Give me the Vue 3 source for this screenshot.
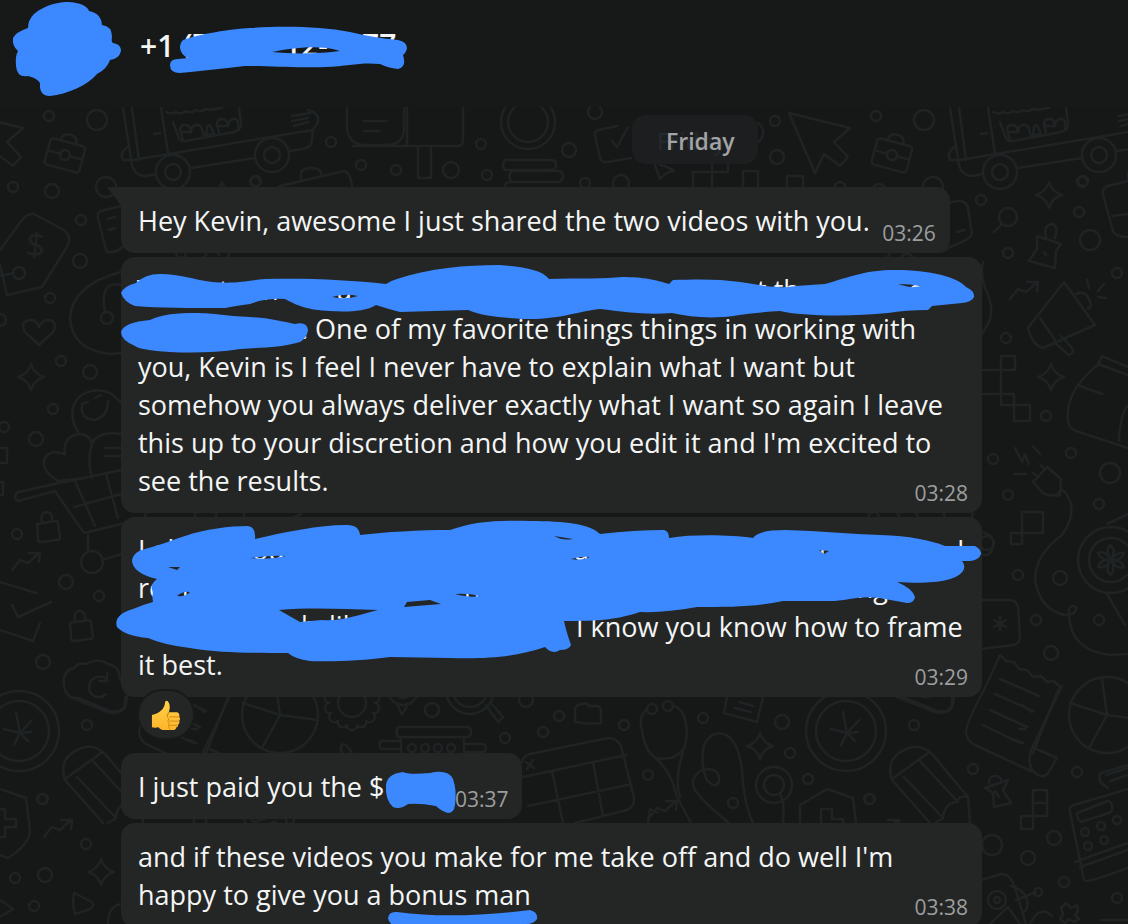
<script setup>
const tileWidth = 827
const tiles = [-tileWidth, 0, tileWidth]

const dots = [
  [49, 116, 5], [97, 120, 10], [13, 187, 5], [52, 191, 7], [106, 187, 10], [81, 220, 5],
  [331, 142, 5], [361, 165, 5], [396, 170, 5], [256, 181, 5], [595, 112, 7], [481, 144, 5],
  [569, 150, 7], [451, 170, 8], [487, 175, 5], [585, 183, 5], [621, 183, 8], [775, 121, 5],
  [777, 157, 7], [981, 200, 5], [1008, 217, 9], [1082, 182, 5], [1079, 212, 5],
  [1090, 240, 10], [1008, 253, 5], [1006, 338, 5], [1117, 273, 5], [80, 261, 7], [50, 298, 5],
  [19, 273, 6], [0, 320, 6], [61, 361, 5], [90, 372, 7], [53, 409, 5], [4, 427, 5],
  [36, 439, 7], [17, 534, 5], [66, 582, 7], [99, 596, 5], [43, 662, 7], [87, 725, 5],
  [43, 799, 5], [86, 844, 5], [15, 878, 5], [45, 875, 7], [34, 906, 5], [92, 562, 11],
  [1046, 416, 5], [1071, 453, 5], [993, 459, 5], [1008, 495, 5], [1110, 473, 10],
  [1099, 504, 5], [1018, 575, 5], [1060, 578, 7], [1036, 620, 5], [1099, 620, 5],
  [1051, 653, 7], [1111, 560, 22], [1111, 560, 33], [432, 710, 7], [505, 738, 5],
  [543, 732, 5], [559, 716, 5], [624, 725, 5], [526, 700, 7], [648, 775, 5], [703, 718, 5],
  [782, 722, 7], [790, 753, 5], [808, 779, 5], [733, 803, 5], [869, 799, 5], [973, 769, 5],
  [1077, 772, 5], [846, 731, 40], [846, 731, 30], [774, 785, 18], [774, 785, 10],
  [992, 845, 10], [1054, 838, 7], [1028, 858, 7], [1064, 882, 5], [1117, 898, 5],
  [997, 900, 9], [997, 900, 3], [1038, 892, 4], [173, 172, 17], [173, 172, 8],
  [272, 155, 17], [272, 155, 8], [528, 122, 27], [528, 122, 20], [107, 318, 6],
  [280, 715, 38], [352, 703, 14], [470, 690, 24],
  [470, 690, 17], [403, 690, 15], [403, 690, 8], [412, 748, 4], [425, 748, 4],
  [438, 748, 4], [451, 748, 4], [652, 709, 5], [668, 706, 5], [987, 543, 7],
  [1085, 832, 4], [1101, 826, 4], [1117, 820, 4], [1088, 846, 4], [1104, 840, 4],
]

const sparkle = (x, y, r) =>
  `M${x} ${y - r}Q${x + 3} ${y - 3} ${x + r} ${y}Q${x + 3} ${y + 3} ${x} ${y + r}Q${x - 3} ${y + 3} ${x - r} ${y}Q${x - 3} ${y - 3} ${x} ${y - r}Z`
const trend = (x, y) => `M${x} ${y}l8-10 8 3 11-10m-10 0h11l-1 9`
const padlock = (x, y) =>
  `M${x - 10} ${y - 7}l18-3q3 0 3 3l2 13q0 3-3 3l-16 2q-3 0-3-3zM${x - 5} ${y - 9}q-2-10 5-10q6 1 5 9`
const gear = (x, y, r, n) => {
  let d = ''
  for (let i = 0; i <= n; i++) {
    const a = (i / n) * Math.PI * 2
    const px = Math.round(x + r * Math.cos(a))
    const py = Math.round(y + r * Math.sin(a))
    d += i ? `A5 5 0 0 1 ${px} ${py}` : `M${px} ${py}`
  }
  return d
}

const doodles = [
  // pointer
  'M789 113L850 128L834 142L848 157L840 166L824 154L815 173Z',
  // van
  'M123 108L132 165Q135 176 146 176L156 174M132 108L139 160M161 108L168 153M128 147Q119 152 123 160L133 160L313 130L312 140Q312 147 303 149L290 151M191 168L255 158',
  'M173 122L178 136Q180 142 186 141L234 132Q242 129 241 123L239 108M166 112q5 3 10 0q5 3 10-1q5 3 10-1q5 3 9-1q8 2 18-2M154 134l6-1',
  'M183 140l-3-10q0-5 5-5t5 4l1 3h-10M191 132q0-6 5-7t6 5l2 6M206 135l1-7q2-5 4-1l3 7zM219 133l-2-9q0-5 5-5t5 4l1 3h-10M228 126q0-6 5-7t5 5l1 6',
  'M292 116l18-3M292 121l16-3M294 126l14-4M308 110Q320 113 318 122L313 130',
  // screens
  'M347 108V130Q350 145 365 145H385Q403 145 404 130V108M364 121H387M364 131H379M353 146H458Q463 146 463 140V108M407 108v38M418 147v31h13v-31',
  // books
  'M505 160h46q5 0 5 5t-5 5h-46q-4-5 0-10M512 171h46q5 0 5 5t-5 6h-46q-5-6 0-11M505 187q0-5 6-5h40',
  // checklist and case
  'M617 126L598 130Q594 132 595 136L600 158Q602 163 607 162L631 158M612 141L617 147L628 127M280 186L344 171Q350 172 352 186M301 178q-2-10 10-10q10 0 10 6',
  'M655 165l5 14q7-8 14-8q-5-4-14-6M693 186v-14h35v-10M712 162v24M743 187v-16h15v16M787 187v-11h16v11M758 123q6 4 5 11t-8 10',
  // price tag
  'M0 265L7 295L42 287L68 245Q72 235 62 229L34 214Q28 213 22 220L0 250M0 276l14-3',
  'M121 206l-20 5q-4 2-3 7l8 32q2 5 15-1M108 219l7-2M109 230l6-2',
  // headset and heart
  'M121 272Q72 285 70 318Q72 350 110 354L121 353M105 313Q99 280 121 285',
  'M39 345L25 332Q20 322 29 320Q37 319 39 327Q42 319 50 320Q58 323 53 332Z',
  sparkle(31, 377, 13), sparkle(1049, 195, 13), sparkle(1051, 377, 13), sparkle(760, 746, 13), sparkle(101, 872, 13),
  // hearts and trolley
  'M78 432Q66 411 79 397Q94 386 110 393L121 402M82 404Q80 419 94 420Q108 417 108 401M82 404l6-2M95 398l6-3',
  'M84 478L58 481Q40 470 45 458Q50 449 65 454Q62 438 78 434Q90 434 92 444M92 478Q86 455 94 440Q102 431 121 434M105 448h16M105 456h16',
  'M55 484L18 492Q12 497 18 501L55 491L84 533L125 523M55 484L121 470M74 507L121 494M75 481L95 526M106 474L118 518M88 535v15M102 560l20-6',
  padlock(47, 531), padlock(80, 630), trend(12, 570), trend(44, 837), trend(1010, 299), trend(649, 818),
  'M0 582L36 593M12 605L18 617L51 602M40 623L33 641L0 630M0 448h7v15h-7M0 482h3v13h-3',
  // cloud
  'M65 690Q60 672 74 668Q78 662 86 664Q98 657 108 664Q120 666 120 680Q128 686 127 700Q124 714 110 711L78 698Q68 699 65 690M107 679Q98 673 91 681Q86 691 94 696Q101 699 106 694M107 673v8h-8',
  // coin mark
  'M843 712l4 21 12-13M847 733l-16-4M847 733l8 8M847 733l-6 12M847 733l11-1',
  'M1111 560q-6-9-1-15q7 5 1 15q6-9 13-7q-2 8-13 7q11 0 13 7q-7 3-13-7q5 9 0 15q-7-5 0-15q-6 9-13 7q2-8 13-7q-11 0-13-7q7-3 13 7',
  // pencils
  'M930 823L892 780Q884 755 912 747Q924 745 933 755L968 797L970 823M892 779L928 753M904 777L943 818L935 823M920 761L958 802M943 818Q944 804 956 802Q960 795 968 797',
  // shields
  'M-27 840V805L0 789L26 798L30 830Q30 844 8 858L-20 848M-6 824v-15h11v10h11v8h-11v10h-6',
  // chart
  'M280 715L243 703M280 715L317 720M280 715L262 748M280 715L275 678M206 753L231 690M195 705l10 7M192 729h6M188 740l8 3',
  gear(352, 703, 23, 14),
  'M486 705l12 17 5-5-13-15M398 706l4 9 5-9',
  // till
  'M398 727h69q4 0 4 5t-4 5h-69q-3-5 0-10M401 739v14M464 739v14M401 741h-20q-3 4 0 8h20M464 744h20q4 4 0 8h-20M342 753q-3-8 2-9q4 2 8 9',
  'M575 722v-14q2-4 8-4q4-2 6 2h8q4 1 4 5v12q-12 2-26-1',
  // calendar
  'M522 762Q523 756 530 754L608 738Q617 738 621 746L634 798Q635 806 627 810L575 823M523 777L626 755M528 806L632 784M552 771L563 823M593 762L603 816M526 762l8 6M533 760l-6 9M648 823l2-14 8 4',
  // stethoscope
  'M647 709Q638 716 642 730Q645 752 656 758Q674 761 683 750Q690 735 684 716Q680 706 672 706M656 758Q673 775 676 795L691 823M683 752Q674 780 680 797',
  'M729 823Q704 803 695 790Q688 777 704 769Q720 768 719 781Q716 790 707 780Q700 765 704 745Q710 731 724 734Q738 739 742 770Q744 805 753 823M780 794q5 8 3 29',
  'M727 697l-3 16 33 9 6-25M739 702l14 4M735 708l16 4',
  'M897 697l38 15q13 3 17-5v-10',
  // receipt
  'M984 690L1000 655l6 6 8 1 5 7 8 1 6 7 8-1 6 6 7-1 6 6M984 690Q962 730 967 736Q968 742 977 746L1031 771M1062 686L1031 750Q1026 768 1038 775Q1045 779 1050 770L1057 758L1034 748M1000 679l39 17M995 694l38 17M990 710l37 17M983 725l37 18',
  // calculator
  'M1128 789L1071 806Q1069 807 1070 812L1084 880Q1085 884 1128 868M1075 862L1128 843M1080 867L1128 850M1077 813l31-12q3 0 4 5t-3 7l-28 9q-4-3-4-9M1128 765l-27 8q-3 4 0 10l7 5M1106 775l22-7M1110 781l18-6',
  'M1033 790h14v26h-14zM1033 803h14M1021 816h12v13h-12z',
  // pins
  'M985 788l23-8-5 10 8 13-17 4-1-14-7-5M989 783q0-8 7-7t5 7M995 791l4 6M1037 236l24 8-5 7-1 17-26-7 8-12zM1046 237q-3-12 6-13 7 2 3 14M1044 252l2 3M1002 224l-8 8',
  // megaphone
  'M1064 282L1095 325L1043 348Q1032 345 1028 328ZM1040 318L1055 340M1056 344l13 11q6-2 3-7l-11-12M1076 294q9-4 13 5t-1 9M1087 280l2 8M1104 284l-6 7M1098 297l8 1',
  'M983 262q-3 12 2 26 10 20 4 34l-8 14M949 203q16-6 19 5l4 26q-2 6-25 14M957 232l8-2',
  'M982 370h19v-14h14v14h-14v35h13v-11h-32M1014 405h16v16h-16zM1022 512h21v21h-21zM1011 533h11v11h-11z',
  'M1128 367l-26-11-4 8 30 11M1100 363Q1065 390 1068 420Q1068 428 1076 431L1128 448M1080 386l22 8M1128 405q-8 10-9 36M1128 181l-20 5q-6 2-5 9l10 36q2 6 15 6M1112 216l16-2',
  // plug
  'M1033 482l14-15 14 12-1 16q-12 2-18-3zM1015 448l7 14 3-8 4 10M1033 446l7 8M1014 474h12M1040 464l5 6M1033 473l6 4M1057 496q3-8 7-5Q1080 510 1062 535Q1035 555 1035 580Q1040 610 1065 615Q1077 615 1076 607Q1068 603 1069 615Q1070 650 1110 655L1128 654M1107 594l18 31M1107 524l21-10',
  'M981 600h28q8 0 9 7l2 30q0 6-6 8l-33 4M1000 616v14M994 620l12 7M1006 620l-12 7M981 529q-12 0-8-17M981 532q14 2 12 14t-12 8',
  // robot
  'M981 880l20-6q10 0 14 14l11 36M1011 886q14 4 16 14t-4 12M1016 900l20-8M990 924l18-17 12 17M1030 924q10-20 22-8M1061 908l5-5 5 5 6-3 1 6-3 4 4 4-5 3-5-3-4 4-5-4 3-5zM1101 920h27',
  'M74 893l18 9q3 4-2 7l-15 5q-3-9-1-21M108 924q0-18 13-20M0 900l13 9-13 8',
]

const messages = [
  {
    id: 'shared', time: '03:26', tail: true, compact: true,
    lines: [{ text: 'Hey Kevin, awesome I just shared the two videos with you.' }],
  },
  {
    id: 'praise', time: '03:28', origin: [-121, -257],
    lines: [
      { text: '' },
      { gap: 'gap-short', text: '. One of my favorite things things in working with' },
      { text: 'you, Kevin is I feel I never have to explain what I want but' },
      { text: 'somehow you always deliver exactly what I want so again I leave' },
      { text: "this up to your discretion and how you edit it and I'm excited to" },
      { text: 'see the results.' },
    ],
    fragments: [[137, 300, 'T'], [219, 300, 't'], [262, 300, 'h'], [337, 300, 'a'], [757, 300, 't th'], [908, 300, 'e']],
    strokes: [
      'M121 293Q124 286 136 283Q145 274 160 274C180 274 195 280 212 282C235 284 245 281 265 279C310 278 350 280 386 284Q390 281 397 279C430 268 465 265 500 265C525 267 542 270 549 279C580 278 605 279 622 277C645 277 655 280 669 284L673 280C700 279 720 279 740 282C765 286 778 289 796 286L825 284C850 277 865 270 895 270C930 270 958 277 966 287Q975 291 974 297Q972 302 962 303L932 306L928 310Q905 310 888 313C850 317 800 316 780 311C765 312 750 313 733 316C710 319 690 317 672 313C645 315 625 312 600 309C575 312 560 319 530 319C505 318 485 317 468 310L400 312Q388 309 376 305C365 312 345 312 330 311C308 310 298 306 285 299Q265 298 250 304Q235 306 225 308C190 308 160 308 135 306Q124 302 121 293ZM332 297Q345 293 358 296Q346 300 332 297ZM898 284Q910 284 921 286Q912 289 898 284Z',
      'M121 332Q124 322 150 320C162 314 178 313 195 313C215 313 225 316 250 317C270 318 285 322 295 324Q307 321 308 330Q307 338 300 342C280 348 265 347 240 349C215 353 190 353 170 352Q140 350 135 346Q121 340 121 332Z',
    ],
  },
  {
    id: 'frame', time: '03:29', origin: [-121, -517], reaction: true,
    lines: [
      { text: '' },
      { text: '' },
      { gap: 'gap-long', text: 'I know you know how to frame' },
      { text: 'it best.' },
    ],
    fragments: [
      [138, 560, 'I al'], [252, 560, 'ou'], [574, 560, 'a'], [819, 560, 'n'], [957, 560, 'I'],
      [138, 598, 're'], [172, 598, 'n'], [464, 598, 'n'], [850, 598, 'ing'],
      [301, 636, 'h'], [329, 636, 'lik'],
    ],
    strokes: [
      'M132 560Q133 552 145 549C160 545 170 541 185 536C205 529 230 526 248 526Q256 527 255 539C285 532 320 525 345 525Q359 524 360 535C385 532 420 530 450 530C475 521 500 520 530 521C565 521 590 524 600 534Q635 530 664 530Q669 531 669 538C695 534 730 535 753 538Q758 530 785 530C820 531 850 534 880 535C910 536 930 540 945 546H975Q981 549 981 554Q979 560 970 561H962Q966 566 963 571C955 582 930 584 897 582Q912 588 915 597Q914 603 907 603Q890 600 880 598C860 595 845 601 830 601H783C755 607 730 607 697 607Q665 613 640 612C615 620 600 621 564 621Q566 631 571 645Q569 650 560 650Q552 655 545 647C515 657 490 659 450 658L390 657C360 661 330 662 310 661Q295 659 288 653C250 653 220 653 190 648Q164 645 148 638Q125 636 117 627Q113 615 133 609Q142 605 153 602Q152 597 153 592Q149 585 157 579Q132 573 132 560ZM279 610C310 607 345 609 378 610C358 615 340 622 322 620L300 622ZM404 607L407 602L430 600L441 604ZM168 567L180 567L177 570ZM250 558Q270 555 286 556Q270 560 250 558ZM177 596Q183 591 190 592Q186 597 177 596ZM455 594Q468 593 480 596Q470 598 455 594ZM571 559Q582 556 590 557Q582 561 571 559ZM554 536L573 539Q563 541 554 536ZM819 550L829 551L824 554Z',
    ],
  },
  {
    id: 'paid', time: '03:37', compact: true, amount: true, origin: [-121, -753],
    lines: [{ text: 'I just paid you the $' }],
    fragments: [],
    strokes: ['M386 785Q387 774 403 772Q408 775 430 773Q448 769 453 779Q457 790 455 805Q454 813 448 813Q441 811 436 806Q420 803 408 804Q400 810 393 807Q385 800 386 785Z'],
  },
  {
    id: 'bonus', time: '03:38', origin: [-121, -823],
    lines: [
      { text: "and if these videos you make for me take off and do well I'm" },
      { text: 'happy to give you a bonus man' },
    ],
    fragments: [],
    strokes: ['M388 918Q389 911 397 912C440 918 490 915 530 910Q538 912 537 919Q534 924 526 924C490 929 440 929 395 926Q389 924 388 918Z'],
  },
]
</script>

<template>
  <div class="page">
    <svg class="wallpaper" aria-hidden="true">
      <g v-for="offset in tiles" :key="offset" :transform="`translate(${offset} 0)`">
        <circle v-for="(dot, i) in dots" :key="i" :cx="dot[0]" :cy="dot[1]" :r="dot[2]" />
        <path v-for="(d, i) in doodles" :key="`p${i}`" :d="d" />
        <g transform="translate(892 155) rotate(15)">
          <rect x="-18" y="-13" width="36" height="27" rx="3" />
          <path d="M-8-13q0-8 8-8t8 8M-18 0H-5M5 0H18" />
          <circle r="5" />
        </g>
      </g>
      <text x="26" y="257" transform="rotate(6 36 245)">$</text>
    </svg>

    <header class="top">
      <svg class="avatar" viewBox="0 0 112 96" role="img" aria-label="Contact">
        <path d="M16 28Q16 20 22 14C34 4 48 2 56 2Q74 3 77 11Q89 13 90 25Q100 26 100 37Q99 42 101 43Q109 44 109 51Q107 59 98 60Q95 69 85 74C75 86 55 94 38 96Q27 96 28 83Q25 78 16 76Q5 78 4 66Q3 56 6 51Q0 46 1 38Q4 32 16 28Z" />
      </svg>
      <h1 class="number">+1</h1>
      <svg class="number-mark" viewBox="0 0 240 50" aria-hidden="true">
        <g class="number-text">
          <text x="13" y="32">(7</text>
          <text x="114" y="32">12-</text>
          <text x="192" y="32">77</text>
        </g>
        <path fill-rule="evenodd" d="M13 16C30 10 60 5 80 4C110 2 150 2 180 8Q205 14 228 16Q237 18 237 24Q236 29 233 31Q237 43 228 45Q218 44 210 40C190 38 180 42 155 43C120 44 100 42 75 42Q40 46 10 49Q0 49 0 41Q0 35 8 35L18 34Q11 31 10 24Q10 19 13 16ZM102 28C120 24 150 20 170 27C150 30 120 30 102 28Z" />
      </svg>
    </header>

    <main class="thread">
      <time class="day">Friday</time>

      <template v-for="message in messages" :key="message.id">
        <article class="bubble" :class="{ compact: message.compact, tail: message.tail }">
          <p class="body">
            <span v-for="(line, i) in message.lines" :key="i" class="line"><span v-if="line.gap" :class="line.gap"></span>{{ line.text }}<span v-if="message.amount" class="gap-amount"></span></span>
          </p>
          <time class="stamp">{{ message.time }}</time>
          <svg v-if="message.strokes" class="marks" aria-hidden="true">
            <g :transform="`translate(${message.origin[0]} ${message.origin[1]})`">
              <text v-for="(part, i) in message.fragments" :key="i" :x="part[0]" :y="part[1]">{{ part[2] }}</text>
              <path v-for="(d, i) in message.strokes" :key="`s${i}`" fill-rule="evenodd" :d="d" />
            </g>
          </svg>
        </article>
        <button v-if="message.reaction" class="reaction" type="button" aria-label="Thumbs up reaction">
          <svg viewBox="0 0 32 32" aria-hidden="true">
            <defs>
              <linearGradient id="thumb" x1="0" y1="0" x2="0" y2="1">
                <stop offset="0" stop-color="#ffd24a" />
                <stop offset="1" stop-color="#fdb52b" />
              </linearGradient>
            </defs>
            <path fill="url(#thumb)" d="M1 16Q7 15 11 11Q15 7 15 2Q17-1 19 3Q21 7 19 13H28Q31 14 30 18Q32 20 30 22Q31 25 29 26Q29 29 27 29Q27 32 23 32H14Q10 32 8 29Q4 30 1 29Z" />
            <path fill="none" stroke="#d58714" stroke-width="1" stroke-linecap="round" d="M19 13Q17 14 17 17M20 18H30M20 22.500H30M20 27H28M19 14Q16 18 19 20Q17 23 19 25Q18 28 20 31" />
          </svg>
        </button>
      </template>
    </main>
  </div>
</template>

<style>
body {
  margin: 0;
  background: #161818;
}
</style>

<style scoped>
.page {
  position: relative;
  height: 100vh;
  overflow: hidden;
  background: #161818;
  color: #f4f5f5;
  font-family: "Open Sans", "Noto Sans", sans-serif;
  font-size: 27px;
  line-height: 38px;
}

.wallpaper {
  position: absolute;
  inset: 0;
  width: 100%;
  height: 100%;
  fill: none;
  stroke: #202323;
  stroke-width: 2.5;
  stroke-linecap: round;
  stroke-linejoin: round;
}

.wallpaper text {
  font-size: 34px;
  fill: #202323;
  stroke: none;
}

.top {
  position: relative;
  display: flex;
  align-items: flex-start;
  box-sizing: border-box;
  height: 107px;
  padding-left: 12px;
  background: #171918;
}

.avatar {
  width: 112px;
  height: 96px;
  fill: #3c89ff;
}

.number {
  width: 30px;
  margin: 27px 0 0 16px;
  font-size: 30px;
  font-weight: 600;
  line-height: 38px;
}

.number-mark {
  width: 240px;
  height: 50px;
  margin-top: 24px;
  fill: #3c89ff;
}

.number-text {
  fill: #f4f5f5;
  font-size: 30px;
  font-weight: 600;
}

.thread {
  position: relative;
  display: flex;
  flex-direction: column;
  align-items: flex-start;
  gap: 4px;
  padding: 8px 0 0 121px;
}

.day {
  box-sizing: border-box;
  margin: 0 0 19px 511px;
  padding: 7px 23px 4px 34px;
  border-radius: 14px;
  background: #1c1e20;
  color: #a2a4a5;
  font-size: 23px;
  font-weight: 600;
  text-shadow: -9px 0 0 #25282a;
}

.bubble {
  position: relative;
  display: grid;
  box-sizing: border-box;
  width: calc(100% - 146px);
  padding: 15px 14px 13px 17px;
  border-radius: 14px;
  background: #242626;
}

.compact {
  width: auto;
}

.tail {
  border-top-left-radius: 0;
}

.tail::before {
  content: "";
  position: absolute;
  top: 0;
  left: -14px;
  width: 15px;
  height: 20px;
  background: #242626;
  clip-path: polygon(0 0, 100% 0, 100% 100%);
}

.body {
  grid-area: 1 / 1;
  margin: 0;
}

.compact .body {
  padding-right: 66px;
}

.line {
  display: block;
  height: 38px;
  white-space: nowrap;
}

.gap-short,
.gap-long,
.gap-amount {
  display: inline-block;
}

.gap-short {
  width: 163px;
}

.gap-long {
  width: 438px;
}

.gap-amount {
  width: 58px;
}

.stamp {
  grid-area: 1 / 1;
  place-self: end;
  margin-bottom: -7px;
  color: #9c9e9e;
  font-size: 21px;
  line-height: 28px;
}

.marks {
  position: absolute;
  inset: 0;
  width: 100%;
  height: 100%;
  overflow: visible;
  fill: #3c89ff;
  pointer-events: none;
}

.marks text {
  fill: #f4f5f5;
}

.reaction {
  position: relative;
  display: grid;
  place-items: center;
  box-sizing: border-box;
  width: 58px;
  height: 51px;
  margin: -12px 0 9px 16px;
  padding: 0;
  border: 2px solid #181a1a;
  border-radius: 26px;
  background: #242626;
}

.reaction svg {
  width: 30px;
  height: 32px;
}
</style>
